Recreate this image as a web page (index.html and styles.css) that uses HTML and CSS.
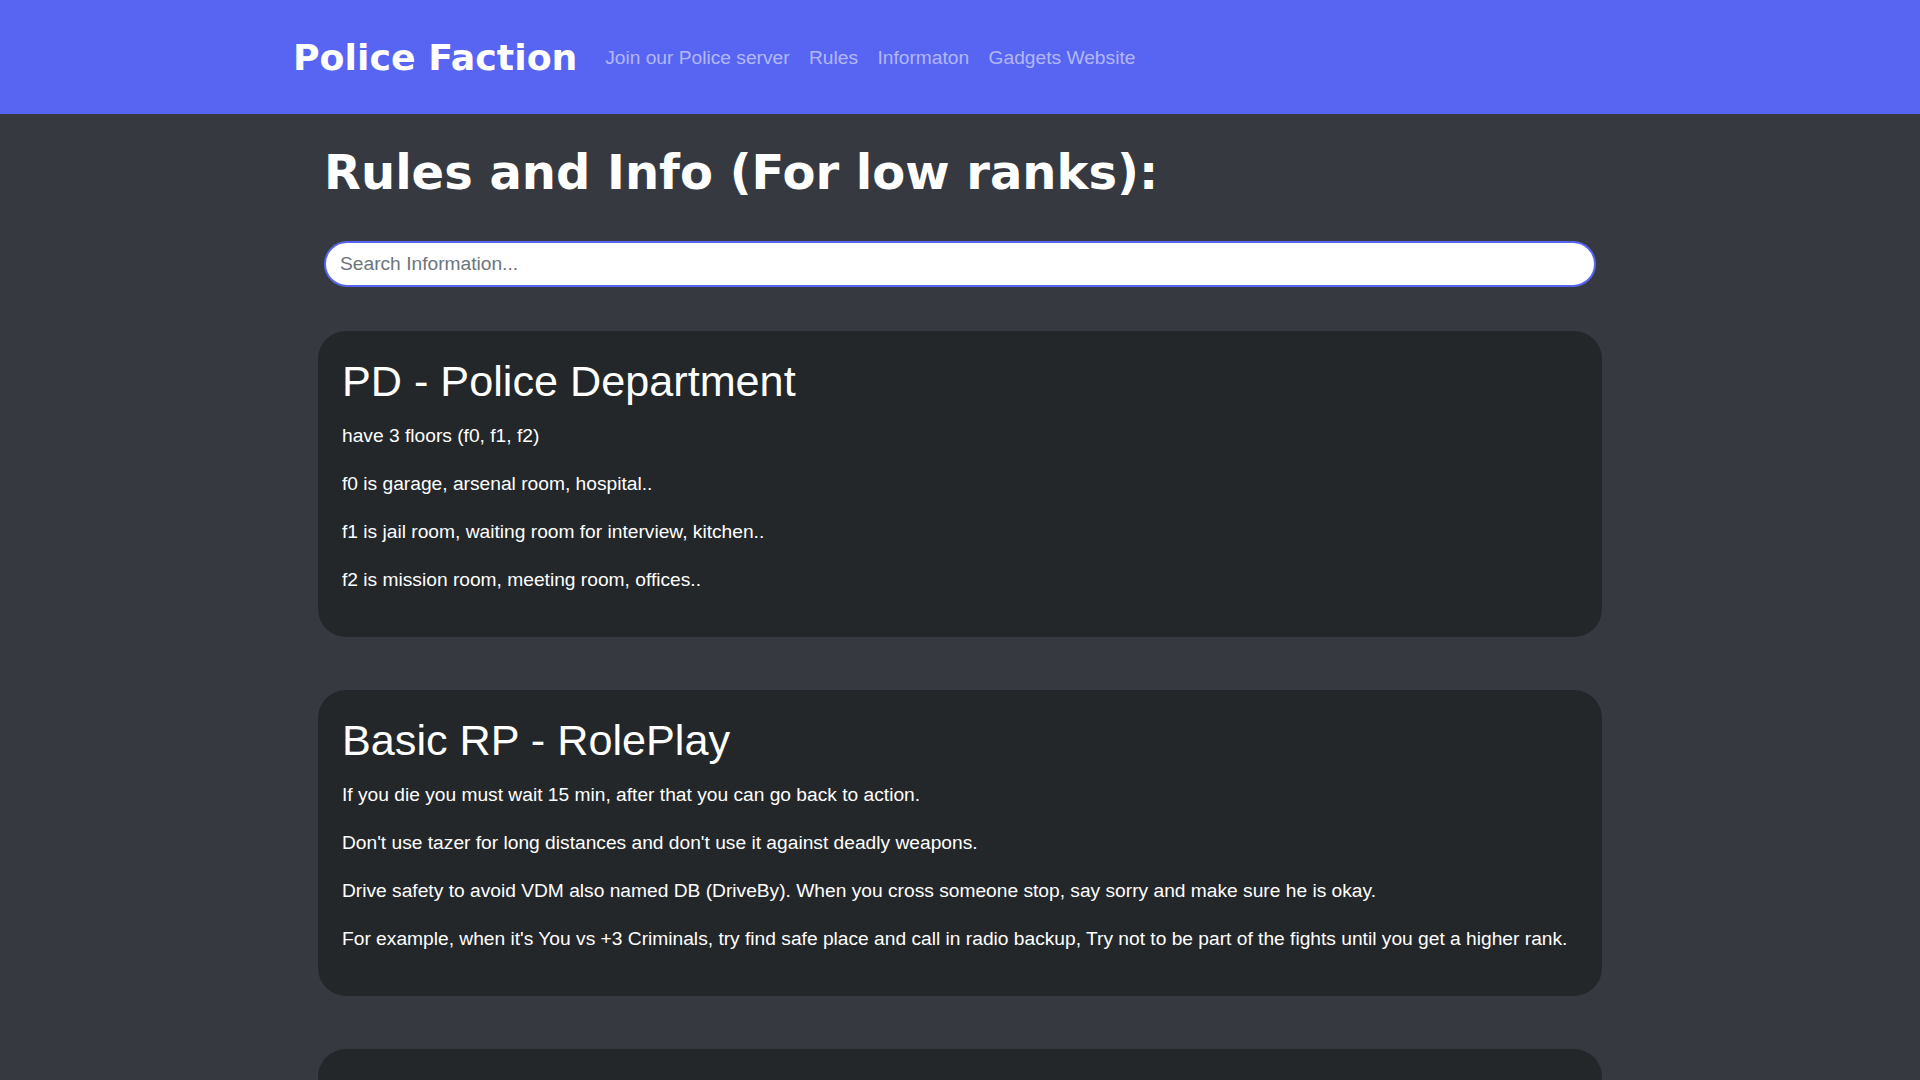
FILE: index.html
```html
<!DOCTYPE html>
<html lang="en">
<head>
<meta charset="utf-8">
<title>Police Faction - Rules and Info</title>
<link rel="stylesheet" href="styles.css">
</head>
<body>
<nav class="navbar">
  <a class="brand" href="#">Police Faction</a>
  <ul class="nav-links">
    <li><a href="#">Join our Police server</a></li>
    <li><a href="#">Rules</a></li>
    <li><a href="#">Informaton</a></li>
    <li><a href="#">Gadgets Website</a></li>
  </ul>
</nav>
<main class="main">
  <div class="intro">
    <h1 class="page-title">Rules and Info (For low ranks):</h1>
    <input class="search" type="text" placeholder="Search Information...">
  </div>
  <section class="card">
    <h2 class="card-title">PD - Police Department</h2>
    <p>have 3 floors (f0, f1, f2)</p>
    <p>f0 is garage, arsenal room, hospital..</p>
    <p>f1 is jail room, waiting room for interview, kitchen..</p>
    <p>f2 is mission room, meeting room, offices..</p>
  </section>
  <section class="card">
    <h2 class="card-title">Basic RP - RolePlay</h2>
    <p>If you die you must wait 15 min, after that you can go back to action.</p>
    <p>Don't use tazer for long distances and don't use it against deadly weapons.</p>
    <p>Drive safety to avoid VDM also named DB (DriveBy). When you cross someone stop, say sorry and make sure he is okay.</p>
    <p>For example, when it's You vs +3 Criminals, try find safe place and call in radio backup, Try not to be part of the fights until you get a higher rank.</p>
  </section>
  <section class="card">
    <h2 class="card-title">Communication</h2>
    <p>Use the radio to talk with your team.</p>
  </section>
</main>
</body>
</html>
```
FILE: styles.css
```css
* { box-sizing: border-box; }
html, body { margin: 0; padding: 0; }
body {
  background: #36393f;
  color: #ffffff;
  font-family: "Liberation Sans", Arial, sans-serif;
  font-size: 19.2px;
  line-height: 1.5;
}
.navbar {
  height: 114px;
  background: #5865f2;
  display: flex;
  align-items: center;
  padding: 2px 0 0 293px;
}
.brand {
  font-family: "DejaVu Sans", sans-serif;
  font-weight: bold;
  font-size: 36.3px;
  line-height: 1.2;
  color: #ffffff;
  text-decoration: none;
  margin-right: 18px;
}
.nav-links {
  list-style: none;
  margin: 0;
  padding: 0;
  display: flex;
}
.nav-links a {
  display: block;
  padding: 0 9.7px;
  color: rgba(255, 255, 255, 0.55);
  text-decoration: none;
  font-size: 19.2px;
}
.main {
  width: 1284px;
  margin: 0 auto;
}
.intro {
  padding: 0 6px;
}
.page-title {
  font-family: "DejaVu Sans", sans-serif;
  font-weight: bold;
  font-size: 48px;
  line-height: 1.2;
  margin: 30px 0 39px;
}
.search {
  display: block;
  width: 100%;
  height: 46px;
  padding: 6px 14px;
  border: 2px solid #5865f2;
  border-radius: 999px;
  background: #ffffff;
  font-family: "Liberation Sans", Arial, sans-serif;
  font-size: 19.2px;
  line-height: 1.5;
  color: #212529;
  outline: none;
  margin-bottom: 44px;
}
.search::placeholder { color: #6c757d; }
.card {
  background: #23272a;
  border-radius: 28px;
  padding: 25px 24px 23px;
  margin-bottom: 53px;
}
.card-title {
  font-size: 43.2px;
  font-weight: normal;
  line-height: 1.2;
  margin: 0 0 14.5px;
}
.card p {
  margin: 0 0 19.2px;
}
```
